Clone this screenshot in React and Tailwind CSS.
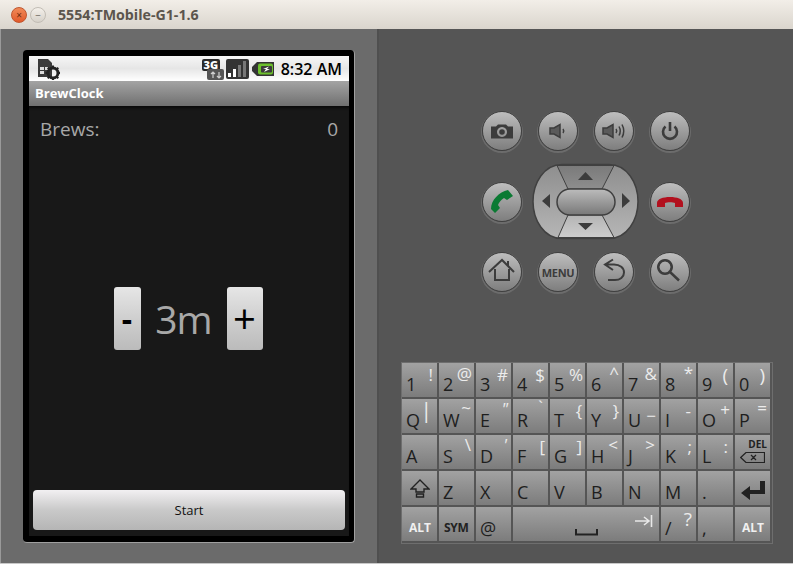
const SANS = "font-['Open_Sans','Noto_Sans',sans-serif]";
const ICON = "#3c3c3c";

// [main, alt, extra classes for the alt glyph]
const topKeys = [
  [["1", "!", "right-[4px] top-[3px]"], ["2", "@", "right-[2px] top-[2px]"], ["3", "#", "right-[3px] top-[3px]"], ["4", "$", "right-[3px] top-[3px]"], ["5", "%", "right-[2px] top-[3px]"], ["6", "^", "right-[3px] top-[1px]"], ["7", "&", "right-[2px] top-[2px]"], ["8", "*", "right-[3px] top-[1px]"], ["9", "(", "right-[5px] top-[3px] text-[19px]"], ["0", ")", "right-[5px] top-[3px] text-[19px]"]],
  [["Q", "|", "right-[5px] top-[2px] text-[21px]"], ["W", "~", "right-[3px] top-[0px]"], ["E", "\"", "right-[3px] top-[1px] italic"], ["R", "`", "right-[5px] top-[-1px]"], ["T", "{", "right-[3px] top-[3px]"], ["Y", "}", "right-[3px] top-[3px]"], ["U", "−", "right-[3px] top-[8px]"], ["I", "-", "right-[5px] top-[3px]"], ["O", "+", "right-[3px] top-[2px]"], ["P", "=", "right-[3px] top-[0px]"]],
  [["A", "", ""], ["S", "\\", "right-[3px] top-[1px]"], ["D", "'", "right-[4px] top-[1px] italic"], ["F", "[", "right-[3px] top-[3px]"], ["G", "]", "right-[3px] top-[3px]"], ["H", "<", "right-[4px] top-[1px]"], ["J", ">", "right-[4px] top-[1px]"], ["K", ";", "right-[4px] top-[3px]"], ["L", ":", "right-[5px] top-[3px]"]],
];

function Key({ main, alt, altClass = "", className = "", children }) {
  return (
    <div className={"relative h-[34px] bg-gradient-to-b from-[#a2a2a2] to-[#7c7c7c] text-[#1e1e1e] " + className}>
      {main && <span className="absolute left-[4px] bottom-[1px] text-[18px] leading-[24px]">{main}</span>}
      {alt && <span className={"absolute leading-[18px] text-[17px] text-[#ececec] " + altClass}>{alt}</span>}
      {children}
    </div>
  );
}

function Round({ children }) {
  return (
    <div className="w-[40px] h-[40px] rounded-full bg-gradient-to-b from-[#bebebe] to-[#7e7e7e] border border-[#404040] shadow-[0_1px_0_1px_#6c6c6c] flex items-center justify-center">
      {children}
    </div>
  );
}

function Glyph({ children }) {
  return <svg className="overflow-visible" width="26" height="26" viewBox="0 0 26 26">{children}</svg>;
}

function Dpad() {
  return (
    <svg className="mr-[1px]" width="107" height="77" viewBox="0 0 107 77">
      <defs>
        <linearGradient id="side" x1="0" y1="0" x2="0" y2="1">
          <stop offset="0" stopColor="#8e8e8e" />
          <stop offset="1" stopColor="#b6b6b6" />
        </linearGradient>
        <linearGradient id="upper" x1="0" y1="0" x2="0" y2="1">
          <stop offset="0" stopColor="#7a7a7a" />
          <stop offset="1" stopColor="#8e8e8e" />
        </linearGradient>
        <linearGradient id="lower" x1="0" y1="0" x2="0" y2="1">
          <stop offset="0" stopColor="#b4b4b4" />
          <stop offset="1" stopColor="#cdcdcd" />
        </linearGradient>
        <linearGradient id="ctr" x1="0" y1="0" x2="0" y2="1">
          <stop offset="0" stopColor="#bcbcbc" />
          <stop offset="1" stopColor="#787878" />
        </linearGradient>
      </defs>
      <path d="M30 1.5 H77 C95 1.5 106 20 106 38.5 C106 57 95 75.5 77 75.5 H30 C12 75.5 1 57 1 38.5 C1 20 12 1.5 30 1.5 Z" fill="url(#side)" stroke="#404040" strokeWidth="1.5" />
      <path d="M25 2.5 H82 L70 26 H36 Z" fill="url(#upper)" stroke="#404040" />
      <path d="M26 74.5 H82 L70 52 H36 Z" fill="url(#lower)" stroke="#404040" />
      <rect x="25" y="26" width="58" height="26" rx="13" fill="url(#ctr)" stroke="#404040" strokeWidth="1.5" />
      <path d="M53.5 9 L46 17 H61 Z M53.5 67 L46 60 H61 Z M10 38 L18 31 V45 Z M98 38 L90 30 V45 Z" fill={ICON} />
    </svg>
  );
}

export default function App() {
  return (
    <div className={"w-[793px] h-[564px] overflow-hidden flex flex-col " + SANS}>
      <div className="h-[29px] shrink-0 bg-gradient-to-b from-[#f2eee8] to-[#dad5cd] flex items-center pl-[11px]">
        <div className="w-[16px] h-[16px] rounded-full bg-gradient-to-b from-[#f08a58] to-[#e2592a] border border-[#c0562e] flex items-center justify-center text-[10px] leading-none text-[#6a2c0e]">×</div>
        <div className="w-[16px] h-[16px] ml-[3px] rounded-full bg-gradient-to-b from-[#f4f0ea] to-[#d6d1c9] border border-[#c2bdb5] flex items-center justify-center text-[10px] leading-none text-[#6a655e]">−</div>
        <span className="ml-[12px] text-[14.2px] font-bold text-[#5b554d]">5554:TMobile-G1-1.6</span>
      </div>

      <div className="flex-1 flex min-h-0 border-b border-[#c8c8c8]">
        <div className="w-[379px] bg-[#6b6b6b] border-l border-l-[#9a9a9a] border-r-2 border-r-[#4f4f4f] pl-[22px] pt-[21px] shrink-0">
          <div className="w-[332px] h-[493px] bg-black rounded-[4px] border-b border-r border-[#a0a0a0] pl-[6px] pt-[6px]">
            <div className="w-[320px] h-[480px] flex flex-col bg-[#181818]">
              <div className="h-[25px] shrink-0 bg-gradient-to-b from-[#f6f6f6] via-[#e6e6e6] to-white flex items-center pl-[8px] pr-[7px]">
                <svg width="23" height="22" viewBox="0 0 23 22">
                  <path d="M1 1 H11 L15 5 V19 H1 Z" fill="#3a3a3a" />
                  <path d="M3 9 H7 V12 H3 Z M8 9 H11 V12 H8 Z M3 13 H7 V16 H3 Z" fill="#dcdcdc" />
                  <circle cx="16" cy="15" r="5" fill="none" stroke="#222" strokeWidth="3" />
                  <path d="M16 7.5 V10 M16 20 V22.5 M8.5 15 H11 M21 15 H23 M10.7 9.7 L12.5 11.5 M19.5 18.5 L21.3 20.3 M21.3 9.7 L19.5 11.5 M12.5 18.5 L10.7 20.3" stroke="#222" strokeWidth="2" />
                </svg>
                <div className="ml-auto flex items-center">
                  <svg width="22" height="22" viewBox="0 0 22 22">
                    <rect x="0" y="1" width="18" height="12" rx="2" fill="#2a2a2a" />
                    <rect x="5" y="11" width="17" height="11" rx="2" fill="#555" />
                    <text x="1.5" y="11" fontSize="11" fontWeight="800" fill="#fff">3G</text>
                    <path d="M11 14 V20 M9 16 L11 14 L13 16 M17 14 V20 M15 18 L17 20 L19 18" fill="none" stroke="#cfcfcf" strokeWidth="1.2" />
                  </svg>
                  <svg className="ml-[2px]" width="23" height="21" viewBox="0 0 23 21">
                    <rect x="0" y="1" width="23" height="20" rx="2" fill="#333" />
                    <path d="M2 19 H5 V15 H2 Z M7 19 H10 V11 H7 Z" fill="#fff" />
                    <path d="M12 19 H15 V7 H12 Z M17 19 H20 V3 H17 Z" fill="#777" />
                  </svg>
                  <svg className="ml-[3px]" width="23" height="16" viewBox="0 0 23 16">
                    <path d="M5 1 H22 V15 H5 L0 10 V6 Z" fill="#333" />
                    <rect x="6" y="2.5" width="15" height="11" rx="2" fill="#6cc02c" />
                    <rect x="9" y="5" width="11" height="6.5" rx="1" fill="#3a3a3a" />
                    <path d="M11 8 L17 5.5 L15 8 L18 8 L12 11 L14 8 Z" fill="#fff" />
                  </svg>
                  <span className="ml-[6px] text-[16px] font-semibold text-black leading-none">8:32 AM</span>
                </div>
              </div>
              <div className="h-[25px] shrink-0 bg-gradient-to-b from-[#a4a4a4] to-[#707070] flex items-center pl-[6px]">
                <span className="text-[13px] font-bold text-white">BrewClock</span>
              </div>
              <div className="flex-1 flex flex-col px-[4px] pb-[6px] pt-[10px] min-h-0 shadow-[inset_0_4px_3px_-2px_#0a0a0a]">
                <div className="flex justify-between text-[19px] leading-[26px] text-[#a8a8a8] px-[7px]">
                  <span>Brews:</span>
                  <span>0</span>
                </div>
                <div className="flex-1 flex items-center justify-center">
                  <div className="flex items-center mt-[5px] -ml-[2px]">
                    <button className="w-[27px] h-[63px] rounded-[3px] bg-gradient-to-b from-[#e6e6e6] via-[#cfcfcf] to-[#bbbbbb] text-[32px] leading-none font-bold text-black">-</button>
                    <span className="w-[86px] text-center text-[39px] tracking-[-1px] leading-none text-[#a8a8a8]">3m</span>
                    <button className="w-[36px] h-[63px] rounded-[3px] bg-gradient-to-b from-[#e6e6e6] via-[#cfcfcf] to-[#bbbbbb] text-[40px] leading-none text-black">+</button>
                  </div>
                </div>
                <button className="h-[40px] pt-[1px] rounded-[4px] bg-gradient-to-b from-[#f2f0f2] via-[#c9c9c9] to-[#b5b5b5] text-[13px] text-[#111]">Start</button>
              </div>
            </div>
          </div>
        </div>

        <div className="flex-1 bg-[#555] flex flex-col items-start pt-[82px]">
          <div className="w-[208px] ml-[103px] flex justify-between">
            <Round><Glyph><path d="M2 8.5 H7 L9 6.5 H17 L19 8.5 H24 V20.5 H2 Z M13 9 A5 5 0 1 0 13.01 9 Z" fill={ICON} fillRule="evenodd" /><circle cx="13" cy="14" r="2.8" fill={ICON} /></Glyph></Round>
            <Round><Glyph><path d="M5 10 H9 L15 6.5 V19.5 L9 16 H5 Z" fill="#5a5a5a" stroke={ICON} strokeWidth="1.5" /><path d="M18 11 Q19.5 13 18 15" fill="none" stroke={ICON} strokeWidth="1.5" /></Glyph></Round>
            <Round><Glyph><path d="M2 10 H6 L12 6.5 V19.5 L6 16 H2 Z" fill="#5a5a5a" stroke={ICON} strokeWidth="1.5" /><path d="M15 11 Q16.5 13 15 15 M18 8.5 Q20.5 13 18 17.5 M21 6.5 Q24.5 13 21 19.5" fill="none" stroke={ICON} strokeWidth="1.5" /></Glyph></Round>
            <Round><Glyph><path d="M8.5 8.5 A7 7 0 1 0 17.5 8.5 M13 4 V13" fill="none" stroke={ICON} strokeWidth="2.6" /></Glyph></Round>
          </div>
          <div className="w-[208px] ml-[103px] mt-[12px] flex justify-between items-center">
            <Round><Glyph><path d="M2 20 C2 11 10 3 19 1 L24 7 L18 11 L15 9 C12 11 10 13 9 16 L11 19 L6 24 Z" fill="#0b7a33" /></Glyph></Round>
            <Dpad />
            <Round><Glyph><path d="M0 14 C0 10 6 8 13 8 C20 8 26 10 26 14 V18 H18 V14 C16 13 10 13 8 14 V18 H0 Z" fill="#b2101e" /></Glyph></Round>
          </div>
          <div className="w-[208px] ml-[103px] mt-[12px] flex justify-between">
            <Round><Glyph><path d="M0 13 L13 1 L25 13 M6 10 V21 H20 V10 M19 6.5 V2" fill="none" stroke={ICON} strokeWidth="2" /></Glyph></Round>
            <Round><span className="text-[11px] font-bold tracking-[-0.3px] text-[#3c3c3c] leading-none">MENU</span></Round>
            <Round><Glyph><path d="M12 0.5 L4 5.5 L12 11 M4.5 5.5 H13 C19 5.5 23 9 23 13.5 C23 18 19 21 14 21 H7" fill="none" stroke={ICON} strokeWidth="2" /></Glyph></Round>
            <Round><Glyph><path d="M8 1.3 A6.7 6.7 0 1 0 8.01 1.3 Z M13 13 L22 21.5" fill="none" stroke={ICON} strokeWidth="2.5" /></Glyph></Round>
          </div>

          <div className="ml-[22px] mt-[70px] w-[372px] h-[182px] border border-[#6e6e6e] grid grid-cols-[repeat(10,35px)] auto-rows-[34px] gap-[2px]">
            {topKeys.map((row) => row.map(([m, a, c]) => <Key key={m} main={m} alt={a} altClass={c} />))}
            <Key>
              <span className="absolute right-[3px] top-[4px] text-[10px] font-bold leading-none text-[#222]">DEL</span>
              <svg className="absolute left-[5px] top-[17px]" width="25" height="11" viewBox="0 0 25 11">
                <path d="M6 0.5 H24.5 V10.5 H6 L0.7 5.5 Z M11 3 L16 8 M16 3 L11 8" fill="none" stroke="#222" strokeWidth="1.2" />
              </svg>
            </Key>
            <Key>
              <svg className="absolute left-[8px] top-[8px]" width="20" height="19" viewBox="0 0 20 19">
                <path d="M10 1 L19 10 H14 V13 H6 V10 H1 Z M6.5 15 H13.5 V18 H6.5 Z" fill="none" stroke="#222" strokeWidth="1.4" />
              </svg>
            </Key>
            {["Z", "X", "C", "V", "B", "N", "M", "."].map((m) => <Key key={m} main={m} />)}
            <Key>
              <svg className="absolute left-[6px] top-[10px]" width="24" height="19" viewBox="0 0 24 19">
                <path d="M19 0 H24 V13 H9 V19 L0 12 L9 5 V9 H19 Z" fill="#222" />
              </svg>
            </Key>
            <Key>
              <span className="absolute left-[7px] bottom-[7px] text-[12px] font-bold leading-none text-[#f0f0f0]">ALT</span>
            </Key>
            <Key>
              <span className="absolute left-[5px] bottom-[7px] text-[12px] font-bold leading-none tracking-[-0.3px] text-[#222]">SYM</span>
            </Key>
            <Key main="@" />
            <Key className="col-span-4">
              <svg className="absolute left-[62px] bottom-[5px]" width="23" height="7" viewBox="0 0 23 7">
                <path d="M1 0 V5.5 H22 V0" fill="none" stroke="#222" strokeWidth="2" />
              </svg>
              <svg className="absolute right-[6px] top-[8px]" width="18" height="12" viewBox="0 0 18 12">
                <path d="M0 6 H13 M9 2 L14 6 L9 10 M16.5 0 V12" fill="none" stroke="#e8e8e8" strokeWidth="1.6" />
              </svg>
            </Key>
            <Key main="/" alt="?" altClass="right-[4px] top-[3px] text-[19px]" />
            <Key main="," />
            <Key>
              <span className="absolute left-[7px] bottom-[7px] text-[12px] font-bold leading-none text-[#f0f0f0]">ALT</span>
            </Key>
          </div>
        </div>
      </div>
    </div>
  );
}
